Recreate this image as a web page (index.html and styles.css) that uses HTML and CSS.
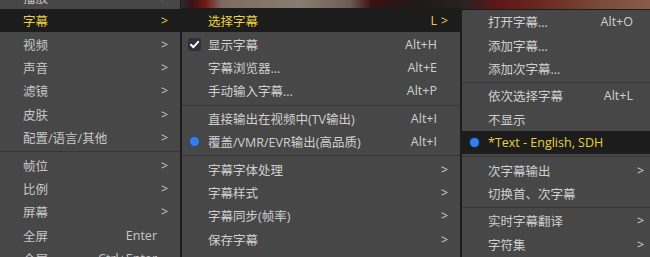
FILE: index.html
```html
<!DOCTYPE html>
<html lang="zh-CN">
<head>
    <meta charset="UTF-8">
    <title>字幕菜单</title>
    <link rel="stylesheet" href="styles.css">
</head>
<body>
    <div class="screen">
        <!-- 主菜单 -->
        <div class="menu menu-main">
            <div class="item"><span class="label">播放</span><span class="arrow">&gt;</span></div>
            <div class="item active"><span class="label">字幕</span><span class="arrow">&gt;</span></div>
            <div class="item"><span class="label">视频</span><span class="arrow">&gt;</span></div>
            <div class="item"><span class="label">声音</span><span class="arrow">&gt;</span></div>
            <div class="item"><span class="label">滤镜</span><span class="arrow">&gt;</span></div>
            <div class="item"><span class="label">皮肤</span><span class="arrow">&gt;</span></div>
            <div class="item"><span class="label">配置/语言/其他</span><span class="arrow">&gt;</span></div>
            <div class="sep"></div>
            <div class="item"><span class="label">帧位</span><span class="arrow">&gt;</span></div>
            <div class="item"><span class="label">比例</span><span class="arrow">&gt;</span></div>
            <div class="item"><span class="label">屏幕</span><span class="arrow">&gt;</span></div>
            <div class="item"><span class="label">全屏</span><span class="key">Enter</span><span class="arrow"></span></div>
            <div class="item"><span class="label">全屏</span><span class="key">Ctrl+Enter</span><span class="arrow"></span></div>
        </div>

        <!-- 字幕子菜单 -->
        <div class="menu menu-sub">
            <div class="item active"><span class="ind"></span><span class="label">选择字幕</span><span class="key">L</span><span class="arrow">&gt;</span></div>
            <div class="item">
                <span class="ind">
                    <svg class="check" width="13" height="13" viewBox="0 0 13 13">
                        <rect width="13" height="13" rx="2" fill="#30303c"/>
                        <path d="M3 6.8 L5.4 9.2 L10.2 3.8" fill="none" stroke="#fff" stroke-width="2" stroke-linecap="round" stroke-linejoin="round"/>
                    </svg>
                </span>
                <span class="label">显示字幕</span><span class="key">Alt+H</span><span class="arrow"></span>
            </div>
            <div class="item"><span class="ind"></span><span class="label">字幕浏览器...</span><span class="key">Alt+E</span><span class="arrow"></span></div>
            <div class="item"><span class="ind"></span><span class="label">手动输入字幕...</span><span class="key">Alt+P</span><span class="arrow"></span></div>
            <div class="sep"></div>
            <div class="item"><span class="ind"></span><span class="label">直接输出在视频中(TV输出)</span><span class="key">Alt+I</span><span class="arrow"></span></div>
            <div class="item"><span class="ind"><span class="dot"></span></span><span class="label">覆盖/VMR/EVR输出(高品质)</span><span class="key">Alt+I</span><span class="arrow"></span></div>
            <div class="sep"></div>
            <div class="item"><span class="ind"></span><span class="label">字幕字体处理</span><span class="arrow">&gt;</span></div>
            <div class="item"><span class="ind"></span><span class="label">字幕样式</span><span class="arrow">&gt;</span></div>
            <div class="item"><span class="ind"></span><span class="label">字幕同步(帧率)</span><span class="arrow">&gt;</span></div>
            <div class="item"><span class="ind"></span><span class="label">保存字幕</span><span class="arrow">&gt;</span></div>
        </div>

        <!-- 选择字幕子菜单 -->
        <div class="menu menu-sub2">
            <div class="item"><span class="ind"></span><span class="label">打开字幕...</span><span class="key">Alt+O</span><span class="arrow"></span></div>
            <div class="item"><span class="ind"></span><span class="label">添加字幕...</span><span class="arrow"></span></div>
            <div class="item"><span class="ind"></span><span class="label">添加次字幕...</span><span class="arrow"></span></div>
            <div class="sep"></div>
            <div class="item"><span class="ind"></span><span class="label">依次选择字幕</span><span class="key">Alt+L</span><span class="arrow"></span></div>
            <div class="item"><span class="ind"></span><span class="label">不显示</span><span class="arrow"></span></div>
            <div class="item active"><span class="ind"><span class="dot"></span></span><span class="label">*Text - English, SDH</span><span class="arrow"></span></div>
            <div class="sep"></div>
            <div class="item"><span class="ind"></span><span class="label">次字幕输出</span><span class="arrow">&gt;</span></div>
            <div class="item"><span class="ind"></span><span class="label">切换首、次字幕</span><span class="arrow"></span></div>
            <div class="sep"></div>
            <div class="item"><span class="ind"></span><span class="label">实时字幕翻译</span><span class="arrow">&gt;</span></div>
            <div class="item"><span class="ind"></span><span class="label">字符集</span><span class="arrow">&gt;</span></div>
        </div>
    </div>
</body>
</html>
```

FILE: styles.css
```css
* {
    margin: 0;
    padding: 0;
    box-sizing: border-box;
}

body {
    width: 650px;
    height: 257px;
    overflow: hidden;
    font-family: "Open Sans", "Noto Sans CJK SC", sans-serif;
    font-size: 12.5px;
    color: #d0d0d0;
    /* 视频画面露出的顶部 */
    background:
        linear-gradient(to right,
            #2a2a2a 0, #2a2a2a 182px,
            #3a1212 192px, #701818 205px, #7e6c60 222px,
            #8a7c70 300px, #6e5c52 350px, #3c1010 372px,
            #1e1a1a 420px, #2a2222 465px, #5e1616 495px,
            #6a2820 540px, #7a4a3a 600px, #8a5c48 650px) top left / 650px 9px no-repeat,
        #1a1a1a;
}

.screen {
    display: flex;
    align-items: flex-start;
    margin-left: -1px;
}

.menu {
    flex: none;
    padding-bottom: 10px;
    background: #474747;
    border: 1px solid #1c1c1c;
}

.menu-main {
    width: 182px;
    margin-top: -15.4px;
    color: #c8c8c8;
}

.menu-sub {
    width: 280px;
    margin-top: 8px;
}

.menu-sub2 {
    width: 196px;
    margin-top: 9px;
}

.item {
    display: flex;
    align-items: center;
    height: 23.4px;
    padding: 0 12px 0 6px;
    white-space: nowrap;
}

.menu-main .item {
    padding-left: 23px;
}

.item.active {
    background: #1c1c1c;
    color: #e8d23c;
}

.ind {
    width: 20px;
    height: 13px;
    flex: none;
    display: flex;
    align-items: center;
}

.check {
    display: block;
}

.dot {
    width: 9px;
    height: 9px;
    margin-left: 2px;
    border-radius: 50%;
    background: #2f80f0;
    box-shadow: 0 0 2px #1a4fa0;
}

.label {
    flex: 1;
}

.key {
    margin-right: 4px;
}

.arrow {
    width: 7px;
    flex: none;
    text-align: right;
}

.sep {
    height: 1px;
    margin: 2px 0 1px;
    background: #363636;
}
```
